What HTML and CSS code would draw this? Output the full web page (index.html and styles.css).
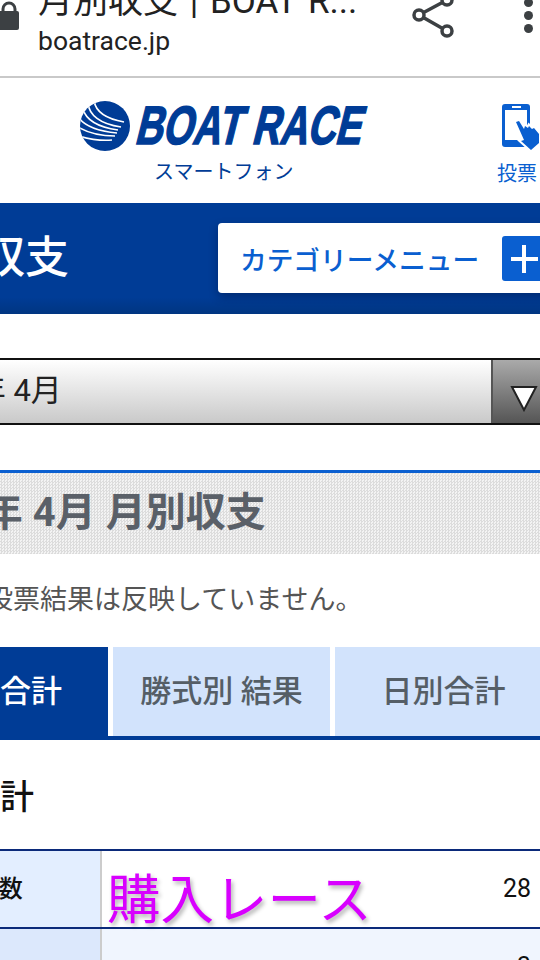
FILE: index.html
```html
<!DOCTYPE html>
<html lang="ja">
<head>
    <meta charset="UTF-8">
    <meta name="viewport" content="width=device-width, initial-scale=1.0">
    <title>月別収支 | BOAT RACE</title>
    <link rel="stylesheet" href="styles.css">
</head>
<body>
    <div class="browser-bar">
        <svg class="lock-icon" width="20" height="34" viewBox="0 0 20 34">
            <path d="M3 13V9a6 6 0 0 1 12 0v4" fill="none" stroke="#3c4043" stroke-width="3"/>
            <rect x="-6" y="11" width="25" height="19" rx="2" fill="#3c4043"/>
        </svg>
        <div class="browser-text">
            <div class="browser-title">月別収支 | BOAT R...</div>
            <div class="browser-url">boatrace.jp</div>
        </div>
        <svg class="share-icon" width="44" height="44" viewBox="0 0 44 44">
            <path d="M36 4 8 19l28 16" fill="none" stroke="#3c4043" stroke-width="3.5"/>
            <circle cx="36" cy="4" r="5" fill="#fff" stroke="#3c4043" stroke-width="3.5"/>
            <circle cx="8" cy="19" r="5" fill="#fff" stroke="#3c4043" stroke-width="3.5"/>
            <circle cx="36" cy="35" r="5" fill="#fff" stroke="#3c4043" stroke-width="3.5"/>
        </svg>
        <div class="menu-dots"><span></span><span></span><span></span></div>
    </div>

    <div class="site-header">
        <div class="logo">
            <svg class="logo-mark" width="288" height="52" viewBox="0 0 288 52">
                <defs>
                    <clipPath id="globe"><circle cx="25" cy="26" r="25"/></clipPath>
                </defs>
                <circle cx="25" cy="26" r="25" fill="#003c96"/>
                <g clip-path="url(#globe)" fill="none" stroke="#fff" stroke-width="1.7">
                    <path d="M14 0c1 10 8 18 30 22"/>
                    <path d="M8 3c1 12 12 21 33 24"/>
                    <path d="M3 9c3 11 14 18 35 21"/>
                    <path d="M-1 18c6 8 18 13 38 15"/>
                    <path d="M-2 27c10 6 22 9 37 9"/>
                    <path d="M-1 36c10 3 21 5 33 4"/>
                </g>
                <text class="logo-text" x="0" y="0" transform="translate(54 44) skewX(-14)" textLength="226" lengthAdjust="spacingAndGlyphs">BOAT RACE</text>
            </svg>
            <div class="logo-sub">スマートフォン</div>
        </div>
        <div class="vote-link">
            <svg width="48" height="46" viewBox="0 0 48 46">
                <rect x="7" y="0" width="28" height="43" rx="3" fill="#0a5fd0"/>
                <rect x="10" y="6" width="22" height="30" fill="#fff"/>
                <rect x="17" y="2" width="9" height="2" fill="#fff"/>
                <path d="M21 18l3-1 5 8 1-3 3 2 1-2 3 3 2-1 5 6v9l-8 7-10-9 3-1z" fill="#fff" stroke="#fff" stroke-width="4"/>
                <path d="M21 18l3-1 5 8 1-3 3 2 1-2 3 3 2-1 5 6v9l-8 7-10-9 3-1z" fill="#0a5fd0"/>
            </svg>
            <div class="vote-label">投票</div>
        </div>
    </div>

    <div class="page-band">
        <div class="page-name">月別収支</div>
        <div class="category-btn">
            <span>カテゴリーメニュー</span>
            <span class="plus-box"><i></i></span>
        </div>
    </div>

    <div class="month-select">
        <div class="month-value">2020年 4月</div>
        <div class="month-arrow">
            <svg width="30" height="28" viewBox="0 0 30 28">
                <path d="M3 3h24L15 26z" fill="#fff" stroke="#222" stroke-width="2"/>
            </svg>
        </div>
    </div>

    <div class="section-title">2020年 4月 月別収支</div>
    <p class="note">投票結果は反映していません。</p>

    <div class="tabs">
        <div class="tab tab-active">月別合計</div>
        <div class="tab tab-mid">勝式別 結果</div>
        <div class="tab tab-last">日別合計</div>
    </div>

    <div class="sub-title">合計</div>

    <div class="result-table">
        <div class="row">
            <div class="row-head">レース数</div>
            <div class="row-value">28</div>
        </div>
        <div class="row row-alt">
            <div class="row-head">的中数</div>
            <div class="row-value">3</div>
        </div>
        <div class="annotation">購入レース</div>
    </div>
</body>
</html>
```

FILE: styles.css
```css
html, body {
    margin: 0;
    height: 960px;
    overflow: hidden;
    background: #fff;
}
body {
    width: 540px;
    font-family: Roboto, "Noto Sans CJK JP", sans-serif;
}

/* browser chrome */
.browser-bar {
    height: 76px;
    border-bottom: 2px solid #c9c9c9;
    display: flex;
    align-items: flex-start;
    overflow: hidden;
}
.lock-icon {
    flex: none;
    width: 20px;
    margin-right: 18px;
}
.browser-text {
    flex: none;
    width: 373px;
    margin-top: -18px;
}
.browser-title {
    font-size: 35px;
    word-spacing: 3px;
    line-height: 40px;
    color: #222;
    white-space: nowrap;
    overflow: visible;
}
.browser-url {
    font-size: 26.5px;
    line-height: 37px;
    color: #222;
}
.share-icon {
    flex: none;
    margin-top: -4px;
}
.menu-dots {
    margin-left: 69px;
    margin-top: -2px;
    display: flex;
    flex-direction: column;
    gap: 4px;
}
.menu-dots span {
    width: 9px;
    height: 9px;
    border-radius: 50%;
    background: #3c4043;
}

/* site header */
.site-header {
    height: 125px;
    display: flex;
    justify-content: space-between;
    padding: 22px 0 0 80px;
    box-sizing: border-box;
}
.logo-mark {
    display: block;
}
.logo-text {
    font-family: "Liberation Sans", sans-serif;
    font-weight: bold;
    font-size: 54px;
    fill: #003c96;
    stroke: #003c96;
    stroke-width: 1.6px;
}
.logo-sub {
    margin: 7px 0 0 74px;
    font-size: 20px;
    line-height: 26px;
    color: #003c96;
}
.vote-link {
    width: 43px;
    margin-top: 4px;
    overflow: hidden;
}
.vote-link svg {
    display: block;
    margin-left: -2px;
}
.vote-label {
    margin-top: 11px;
    font-size: 20px;
    line-height: 26px;
    color: #0a5fd0;
}

/* blue band */
.page-band {
    height: 111px;
    background: linear-gradient(#003c96 85%, #003581);
    display: flex;
    align-items: center;
    overflow: hidden;
}
.page-name {
    flex: none;
    width: 218px;
    text-indent: -107px;
    margin-top: -2px;
    font-size: 44px;
    font-weight: 500;
    line-height: 60px;
    color: #fff;
    white-space: nowrap;
}
.category-btn {
    flex: none;
    width: 340px;
    height: 70px;
    margin-top: -1px;
    padding-left: 22px;
    box-sizing: border-box;
    background: #fff;
    border-radius: 4px;
    box-shadow: 0 4px 10px rgba(0, 0, 30, 0.3);
    display: flex;
    align-items: center;
    gap: 23px;
    font-size: 26.7px;
    font-weight: 500;
    color: #0a5fd0;
    white-space: nowrap;
}
.plus-box {
    flex: none;
    width: 45px;
    height: 45px;
    border-radius: 3px;
    background: #0a5fd0;
    position: relative;
}
.plus-box i {
    position: absolute;
    left: 9px;
    top: 21px;
    width: 27px;
    height: 4px;
    background: #fff;
}
.plus-box i::after {
    content: "";
    position: absolute;
    left: 11px;
    top: -12px;
    width: 4px;
    height: 28px;
    background: #fff;
}

/* month select */
.month-select {
    margin-top: 44px;
    height: 67px;
    box-sizing: border-box;
    border-top: 2px solid #111;
    border-bottom: 2px solid #111;
    background: linear-gradient(#fff, #c9c9c9);
    display: flex;
}
.month-value {
    width: 491px;
    text-indent: -95px;
    font-size: 31px;
    line-height: 62px;
    color: #222;
    white-space: nowrap;
    overflow: hidden;
}
.month-arrow {
    flex: 1;
    border-left: 2px solid #555;
    background: linear-gradient(#aaa, #555);
    padding: 24px 0 0 16px;
    overflow: hidden;
}
.month-arrow svg {
    display: block;
}

/* section heading */
.section-title {
    margin-top: 45px;
    height: 84px;
    box-sizing: border-box;
    border-top: 3px solid #0a5fd0;
    background: repeating-conic-gradient(#dcdcdc 0 25%, #f3f3f3 0 50%) 0 0 / 3px 3px;
    text-indent: -109px;
    font-size: 40px;
    font-weight: 700;
    line-height: 80px;
    color: #5a6068;
    white-space: nowrap;
}
.note {
    margin: 27px 0 0;
    text-indent: -14px;
    font-size: 27px;
    line-height: 38px;
    color: #555;
    white-space: nowrap;
}

/* tabs */
.tabs {
    margin-top: 28px;
    height: 93px;
    box-sizing: border-box;
    border-bottom: 4px solid #003c96;
    display: flex;
    gap: 5px;
    overflow: hidden;
}
.tab {
    flex: none;
    text-align: center;
    font-size: 31px;
    font-weight: 500;
    line-height: 90px;
    white-space: nowrap;
    background: #d2e3fc;
    color: #555e66;
}
.tab-active {
    width: 108px;
    background: #003c96;
    color: #fff;
    text-align: left;
    text-indent: -62px;
    overflow: hidden;
}
.tab-mid {
    width: 217px;
}
.tab-last {
    width: 217px;
}

/* table */
.sub-title {
    margin-top: 34px;
    text-indent: -34px;
    font-size: 34px;
    font-weight: 500;
    line-height: 46px;
    color: #111;
    white-space: nowrap;
}
.result-table {
    margin-top: 29px;
    position: relative;
}
.row {
    height: 78px;
    box-sizing: border-box;
    border-top: 2px solid #0b2a7a;
    display: flex;
}
.row-head {
    width: 102px;
    box-sizing: border-box;
    border-right: 2px solid #ccc;
    background: #e3eeff;
    text-indent: -72px;
    font-size: 24px;
    font-weight: 500;
    line-height: 76px;
    color: #111;
    white-space: nowrap;
}
.row-value {
    flex: 1;
    padding-right: 9px;
    text-align: right;
    font-size: 25px;
    line-height: 76px;
    color: #111;
}
.row-alt .row-head {
    background: #dce8fc;
}
.row-alt .row-value {
    background: #f0f5fe;
}
.annotation {
    position: absolute;
    left: 107px;
    top: 17px;
    font-size: 53.5px;
    line-height: 70px;
    color: #d800ff;
    text-shadow: 2px 3px 4px rgba(0, 0, 0, 0.3);
    white-space: nowrap;
}
```
